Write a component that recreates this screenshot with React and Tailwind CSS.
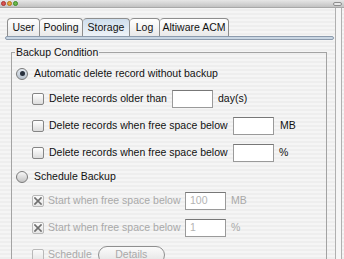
import React from 'react';

function Radio({ checked }) {
  return (
    <span
      className={
        'w-[12px] h-[12px] rounded-full border border-[#7a7a7a] flex items-center justify-center shrink-0 ' +
        (checked
          ? 'bg-[linear-gradient(#e4eaf1,#b4bfcb)]'
          : 'bg-[linear-gradient(#f7f7f7,#c4c4c4)]')
      }
    >
      {checked && <span className="w-[5px] h-[5px] rounded-full bg-[#27303d]" />}
    </span>
  );
}

function Check({ crossed, disabled }) {
  return (
    <span
      className={
        'w-[12px] h-[12px] rounded-[2px] border flex items-center justify-center shrink-0 ' +
        (disabled
          ? 'border-[#b9b9b9] bg-[linear-gradient(#fafafa,#e6e6e6)]'
          : 'border-[#858585] bg-[linear-gradient(#ffffff,#dcdcdc)]')
      }
    >
      {crossed && (
        <svg width="8" height="8" viewBox="0 0 8 8">
          <path d="M1 1L7 7M7 1L1 7" stroke="#6f6f6f" strokeWidth="1.7" strokeLinecap="square" />
        </svg>
      )}
    </span>
  );
}

function Field({ value, width = 'w-[41px]' }) {
  return (
    <span
      className={
        width +
        ' h-[18px] bg-white border border-[#9a9a9a] border-t-[#777] flex items-center pl-[4px] text-[#b3b3b3] shrink-0'
      }
    >
      {value}
    </span>
  );
}

const tabs = [
  { label: 'User', w: 'w-[33px]' },
  { label: 'Pooling', w: 'w-[43px]' },
  { label: 'Storage', w: 'w-[47px]', active: true },
  { label: 'Log', w: 'w-[30px]' },
  { label: 'Altiware ACM', w: 'w-[69px]' },
];

export default function App() {
  return (
    <div className="w-[344px] h-[259px] overflow-hidden flex flex-col font-['Liberation_Sans',Arial,sans-serif] text-[10.5px] text-[#111] bg-[repeating-linear-gradient(0deg,#eeeeee_0px,#eeeeee_2px,#f5f5f5_2px,#f5f5f5_4px)]">
      {/* title bar */}
      <div className="h-[8px] shrink-0 flex items-center justify-between pl-[1px] pr-[2px] bg-[linear-gradient(#e6e6e6,#c2c2c2)] border-b border-[#a8a8a8]">
        <div className="flex gap-[1px]">
          <span className="w-[5px] h-[5px] rounded-full bg-[#d9534f] border border-[#a33]" />
          <span className="w-[5px] h-[5px] rounded-full bg-[#e8a33a] border border-[#b27519]" />
          <span className="w-[5px] h-[5px] rounded-full bg-[#6cb84a] border border-[#3f8a2a]" />
        </div>
        <span className="w-[9px] h-[4px] rounded-full border border-[#8d8d8d] bg-[#e9e9e9]" />
      </div>

      <div className="flex-1 flex">
        <div className="w-[335px] flex flex-col pt-[10px]">
          {/* tabs */}
          <div className="flex pl-[7px] h-[18px]">
            {tabs.map((t, i) => (
              <div
                key={t.label}
                className={
                  t.w +
                  ' h-full flex items-center justify-center pt-[1px] border-t border-r border-[#8e8e8e] rounded-t-[4px] ' +
                  (i === 0 ? 'border-l ' : '') +
                  (t.active
                    ? 'bg-[linear-gradient(#cfdeed,#eef3f8)]'
                    : 'bg-[linear-gradient(#ffffff,#e9e9e9)]')
                }
              >
                {t.label}
              </div>
            ))}
          </div>
          <div className="ml-[5px] mr-[1px] h-[4px] rounded-full border border-[#8c9bad] bg-[#c9d6e3]" />

          {/* group box */}
          <fieldset className="mt-[6px] ml-[11px] w-[316px] h-[260px] border border-[#a3a3a3] pl-[3px] shrink-0">
            <legend className="px-[1px] leading-[13px]">Backup Condition</legend>
            <div className="flex flex-col pt-[3px] pl-[1px]">
              <div className="h-[23px] flex items-center gap-[6px]">
                <Radio checked />
                <span>Automatic delete record without backup</span>
              </div>

              <div className="h-[27px] flex items-center pl-[16px]">
                <Check />
                <span className="w-[128px] pl-[5px] shrink-0">Delete records older than</span>
                <Field />
                <span className="pl-[5px]">day(s)</span>
              </div>
              <div className="h-[27px] flex items-center pl-[16px]">
                <Check />
                <span className="w-[189px] pl-[5px] shrink-0">Delete records when free space below</span>
                <Field />
                <span className="pl-[6px]">MB</span>
              </div>
              <div className="h-[27px] flex items-center pl-[16px]">
                <Check />
                <span className="w-[189px] pl-[5px] shrink-0">Delete records when free space below</span>
                <Field />
                <span className="pl-[5px]">%</span>
              </div>

              <div className="h-[22px] flex items-center gap-[6px]">
                <Radio />
                <span>Schedule Backup</span>
              </div>

              <div className="h-[26px] flex items-center pl-[16px] text-[#a9a9a9]">
                <Check crossed disabled />
                <span className="w-[141px] pl-[4px] shrink-0">Start when free space below</span>
                <Field value="100" />
                <span className="pl-[5px]">MB</span>
              </div>
              <div className="h-[27px] flex items-center pl-[16px] text-[#a9a9a9]">
                <Check crossed disabled />
                <span className="w-[141px] pl-[4px] shrink-0">Start when free space below</span>
                <Field value="1" />
                <span className="pl-[5px]">%</span>
              </div>
              <div className="h-[27px] flex items-center pl-[16px] text-[#a9a9a9]">
                <Check disabled />
                <span className="pl-[4px]">Schedule</span>
                <span className="ml-[6px] w-[67px] h-[18px] rounded-full border border-[#8f8f8f] bg-[linear-gradient(#fbfbfb,#e2e2e2)] flex items-center justify-center">
                  Details
                </span>
              </div>
            </div>
          </fieldset>
        </div>

        {/* scrollbar */}
        <div className="w-[7px] border-l border-r border-[#b0b0b0] bg-[#f6f6f6] flex flex-col justify-end items-center pb-[8px]">
          <span className="w-0 h-0 border-l-[2px] border-r-[2px] border-b-[3px] border-l-transparent border-r-transparent border-b-[#555]" />
          <span className="mt-[2px] w-0 h-0 border-l-[2px] border-r-[2px] border-t-[3px] border-l-transparent border-r-transparent border-t-[#555]" />
        </div>
      </div>
    </div>
  );
}
